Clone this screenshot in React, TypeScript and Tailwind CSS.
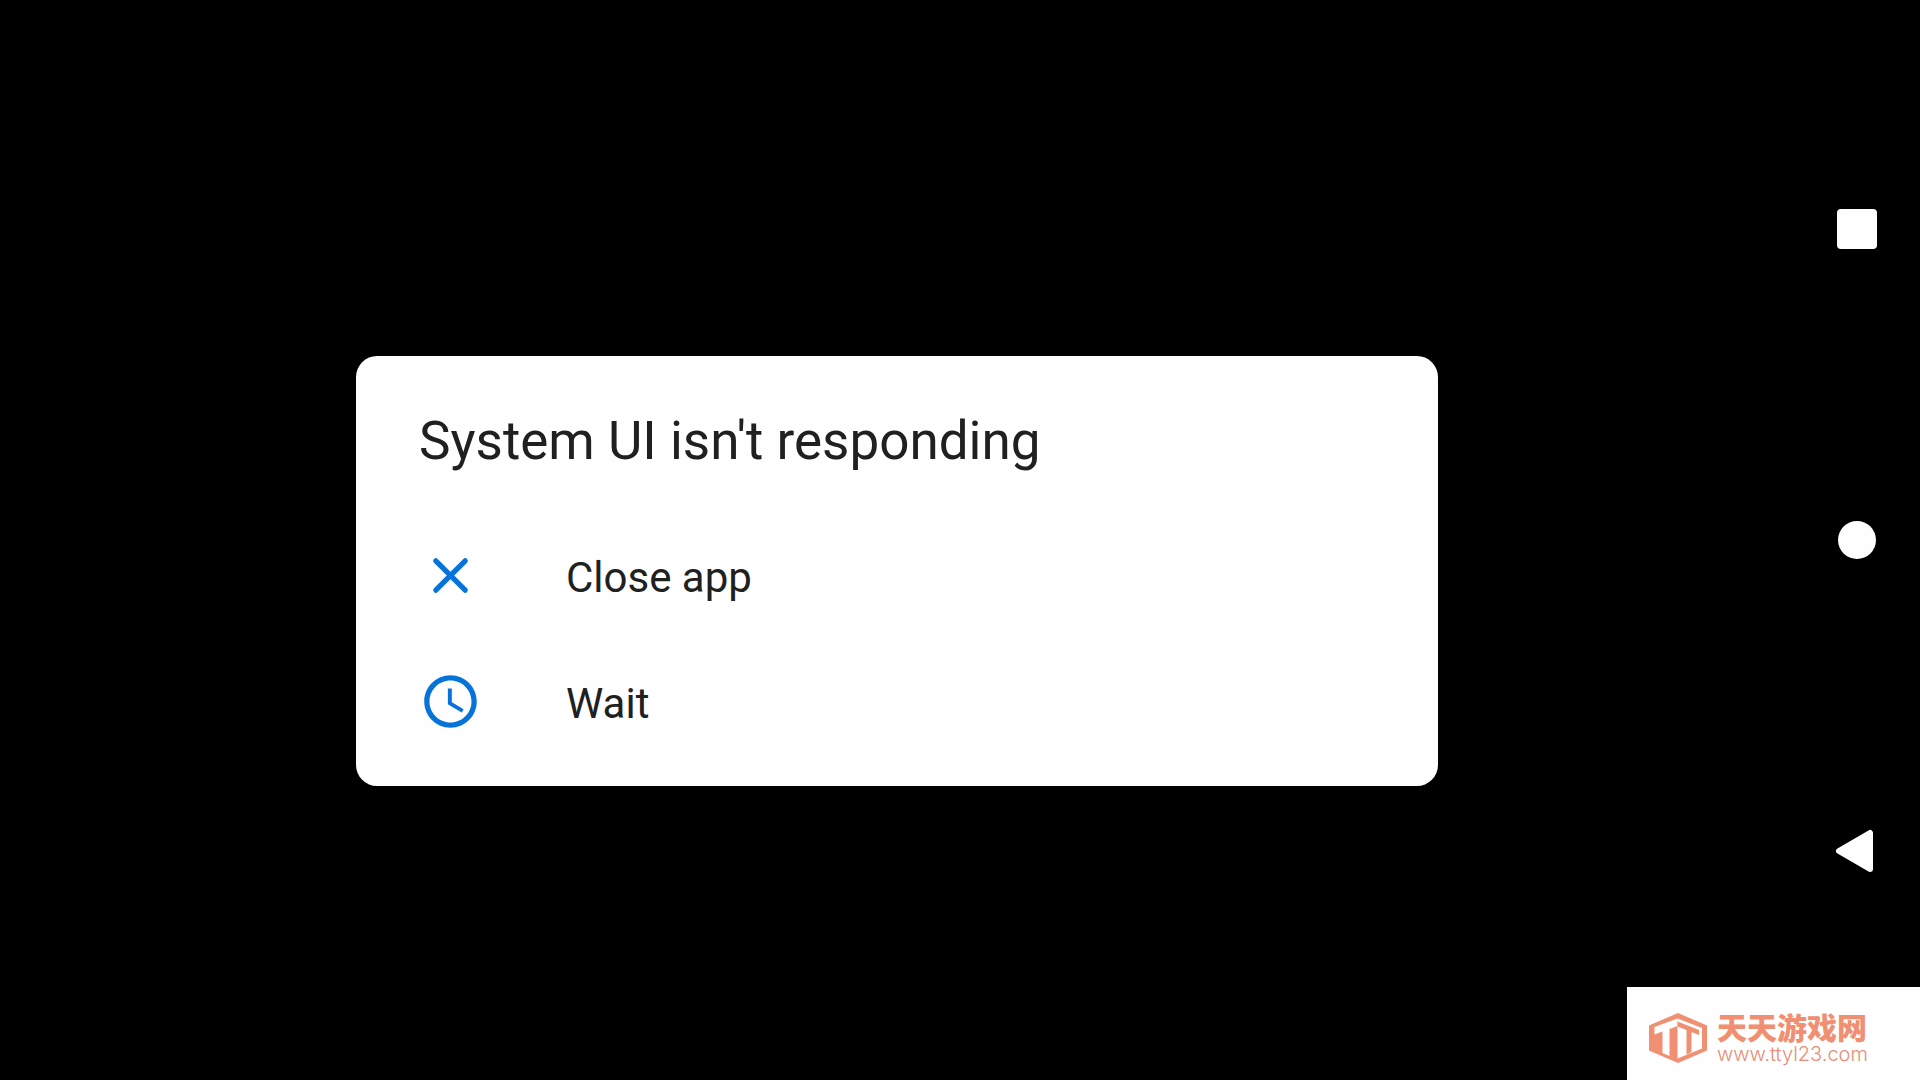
import type { ReactNode } from 'react'

interface ActionProps {
  label: string
  icon: ReactNode
}

function CloseIcon() {
  return (
    <svg viewBox="0 0 24 24" className="size-[63px] shrink-0" fill="none" stroke="#0673db" strokeWidth="2" strokeLinecap="round" aria-hidden="true">
      <path d="M6.4 6.4 17.6 17.6M17.6 6.4 6.4 17.6" />
    </svg>
  )
}

function ClockIcon() {
  return (
    <svg viewBox="0 0 24 24" className="size-[63px] shrink-0" fill="#0673db" aria-hidden="true">
      <path d="M11.99 2C6.47 2 2 6.48 2 12s4.47 10 9.99 10C17.52 22 22 17.52 22 12S17.52 2 11.99 2zM12 20c-4.42 0-8-3.58-8-8s3.58-8 8-8 8 3.58 8 8-3.58 8-8 8z" />
      <path d="M12.5 7H11v6l5.25 3.15.75-1.23-4.5-2.67z" />
    </svg>
  )
}

function Action({ label, icon }: ActionProps) {
  return (
    <button type="button" className="flex h-[126px] w-full items-center gap-[84px] px-[63px] text-left text-[42px]">
      {icon}
      <span className="pt-1">{label}</span>
    </button>
  )
}

function Dialog() {
  return (
    <section
      role="dialog"
      aria-labelledby="dialog-title"
      className="w-3/5 min-w-[1082px] rounded-[21px] bg-[#fefefe] pt-[54px] pb-[22px] text-[#202020]"
    >
      <h1 id="dialog-title" className="mb-10 px-[63px] text-[53px] leading-[62px]">
        System UI isn't responding
      </h1>
      <Action label="Close app" icon={<CloseIcon />} />
      <Action label="Wait" icon={<ClockIcon />} />
    </section>
  )
}

function NavBar() {
  return (
    <nav className="flex w-[126px] flex-col items-center justify-center gap-[247px]">
      <button type="button" aria-label="Recent apps" className="size-16">
        <svg viewBox="0 0 64 64" fill="#fefefe">
          <rect x="12" y="12" width="40" height="40" rx="4" />
        </svg>
      </button>
      <button type="button" aria-label="Home" className="size-16">
        <svg viewBox="0 0 64 64" fill="#fefefe">
          <circle cx="32" cy="32" r="19" />
        </svg>
      </button>
      <button type="button" aria-label="Back" className="size-16">
        <svg viewBox="0 0 64 64" fill="#fefefe" stroke="#fefefe" strokeWidth="6" strokeLinejoin="round">
          <path d="M14 32 45 14V50z" />
        </svg>
      </button>
    </nav>
  )
}

function Watermark() {
  return (
    <div className="absolute right-0 bottom-0 flex h-[93px] w-[293px] items-center gap-[10px] bg-[#fefefe] pt-2 pl-[22px]">
      <svg viewBox="0 0 58 50" className="h-[50px] w-[58px] shrink-0" aria-hidden="true">
        <path fill="#f08f72" d="M29 0 58 12.500V37.500L29 50 0 37.500V12.500z" />
        {/* left face */}
        <path fill="#fefefe" d="M5.500 14 28.500 5.500V13L20.500 16V43L13.500 40V18.500L5.500 21.500z" />
        {/* right face */}
        <path fill="#fefefe" d="M28.500 5.500 53 15V35.500L28.500 45.500z" />
        <path fill="#f08f72" d="M28.500 8.500 50 17V22L42.500 19V39L37.500 41.500V17L28.500 13.500z" />
      </svg>
      <div className="flex flex-col gap-1 text-[#f08f72]">
        <span className="font-['Noto_Sans_CJK_SC',sans-serif] text-[30px] leading-7 font-black">天天游戏网</span>
        <span className="font-[Inter,sans-serif] text-[20px] leading-5 font-light text-[#e58e78]">www.ttyl23.com</span>
      </div>
    </div>
  )
}

export default function App() {
  return (
    <div className="relative flex min-h-screen bg-black font-[Roboto,sans-serif]">
      <main className="flex flex-1 items-center justify-center pt-[62px]">
        <Dialog />
      </main>
      <NavBar />
      <Watermark />
    </div>
  )
}
